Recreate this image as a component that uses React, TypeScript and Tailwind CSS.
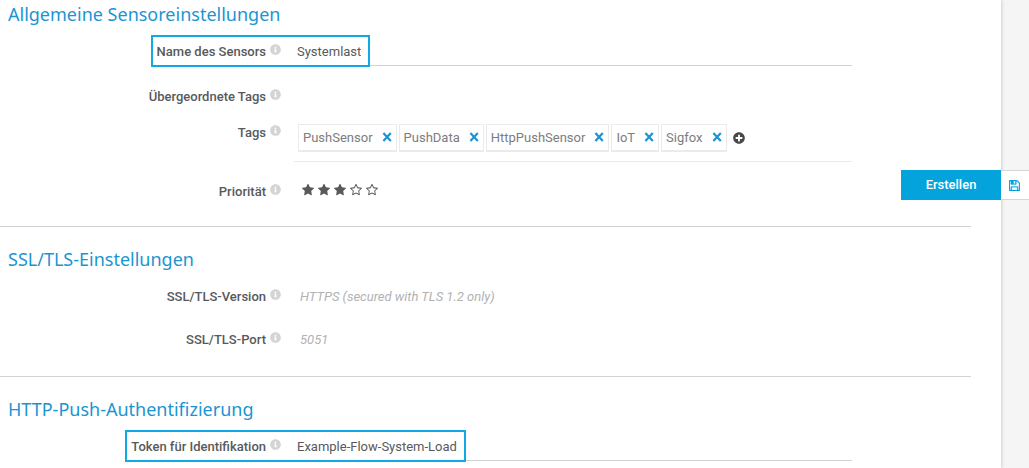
import { useState } from 'react';
import type { ReactNode } from 'react';
import { FaInfoCircle, FaPlusCircle } from 'react-icons/fa';

const STAR =
  'M1728 647q0 22-26 48l-363 354 86 500q1 7 1 20 0 21-10.5 35.5t-30.5 14.5q-19 0-40-12l-449-236-449 236q-22 12-40 12-21 0-31.5-14.5t-10.5-35.5q0-6 2-20l86-500-364-354q-25-27-25-48 0-37 56-46l502-73 225-455q19-41 49-41t49 41l225 455 502 73q56 9 56 46z';
const STAR_OUTLINE = 'M1201 1004l306-297-422-62-189-382-189 382-422 62 306 297-73 421 378-199 377 199z' + STAR.replace('M1728 647', 'm527-357');

function SaveIcon() {
  return (
    <svg viewBox="0 128 1536 1536" fill="currentColor" stroke="currentColor" strokeWidth="40" className="size-[11px]" aria-hidden="true">
      <path d="M384 1536h768v-384h-768v384zm896 0h128v-896q0-14-10-38.5t-20-34.5l-281-281q-10-10-34-20t-39-10v416q0 40-28 68t-68 28h-576q-40 0-68-28t-28-68v-416h-128v1280h128v-416q0-40 28-68t68-28h832q40 0 68 28t28 68v416zm-384-928v-320q0-13-9.5-22.5t-22.5-9.5h-192q-13 0-22.5 9.5t-9.5 22.5v320q0 13 9.5 22.5t22.5 9.5h192q13 0 22.5-9.5t9.5-22.5zm640 32v928q0 40-28 68t-68 28h-1344q-40 0-68-28t-28-68v-1344q0-40 28-68t68-28h928q40 0 88 20t76 48l280 280q28 28 48 76t20 88z" />
    </svg>
  );
}

function LabelContent({ children }: { children: ReactNode }) {
  return (
    <>
      {children}
      <FaInfoCircle className="mb-1.5 ml-1 size-[11px] text-[#d3d4d5]" aria-hidden="true" />
    </>
  );
}

function Section({ title, children }: { title: string; children: ReactNode }) {
  return (
    <section>
      <h2 className="pl-2 font-['Noto_Sans',sans-serif] text-lg leading-[26px] text-[#1b95d1]">{title}</h2>
      {children}
    </section>
  );
}

function Row({ label, className, children }: { label: string; className: string; children?: ReactNode }) {
  return (
    <div role="group" aria-label={label} className={`flex items-start ${className}`}>
      <span className="flex h-6 w-[294px] shrink-0 items-center justify-end pr-[13px] font-medium">
        <LabelContent>{label}</LabelContent>
      </span>
      {children}
    </div>
  );
}

// label and input share one outline, the underline runs on behind it
function HighlightedRow({ id, label, defaultValue }: { id: string; label: string; defaultValue: string }) {
  return (
    <div className="mt-2 flex items-start">
      <div className="flex w-[294px] shrink-0 justify-end">
        <label htmlFor={id} className="flex h-8 items-center border-y-2 border-l-2 border-[#0fa9e4] pt-0.5 pr-[13px] pl-1 font-medium">
          <LabelContent>{label}</LabelContent>
        </label>
      </div>
      <div className="mr-[149px] flex-1 border-b border-[#d2d3d4]">
        <input
          id={id}
          defaultValue={defaultValue}
          className="-mb-0.5 block h-8 field-sizing-content border-y-2 border-r-2 border-[#0fa9e4] bg-white pr-[7px] pl-[3px] outline-none"
        />
      </div>
    </div>
  );
}

function Rating() {
  const [value, setValue] = useState(3);
  return (
    <div className="flex h-5 items-center pl-[6px]">
      {[1, 2, 3, 4, 5].map((n) => (
        <button key={n} type="button" aria-label={`${n}`} onClick={() => setValue(n)} className="flex w-4 justify-center">
          <svg viewBox="64 128 1664 1536" fill="currentColor" className="size-3">
            <path d={n <= value ? STAR : STAR_OUTLINE} />
          </svg>
        </button>
      ))}
    </div>
  );
}

function Tags() {
  const [tags, setTags] = useState(['PushSensor', 'PushData', 'HttpPushSensor', 'IoT', 'Sigfox']);
  return (
    <div className="mr-[149px] flex flex-1 items-center gap-0.5 border-b border-[#ebebeb] pb-[9px] pl-1">
      {tags.map((tag) => (
        <span key={tag} className="flex h-7 items-center gap-[9px] border border-b-2 border-[#ebebeb] px-1 text-[#7c7d7e]">
          {tag}
          <button type="button" aria-label={`${tag} ×`} onClick={() => setTags(tags.filter((x) => x !== tag))} className="mb-0.5 text-[#1b95d1]">
            <svg viewBox="0 0 10 10" className="size-[10px]" fill="none" stroke="currentColor" strokeWidth="2.2">
              <path d="M1.4 1l7.4 8M8.8 1L1.4 9" />
            </svg>
          </button>
        </span>
      ))}
      <button type="button" aria-label="+" className="ml-1">
        <FaPlusCircle className="size-3 text-[#464849]" />
      </button>
    </div>
  );
}

export default function App() {
  return (
    <div className="relative flex min-h-screen bg-[#f5f5f5] font-[Roboto,sans-serif] text-[13px] leading-4 text-[#58595b]">
      <main className="min-w-0 flex-1 bg-white pt-px shadow-[1px_0_3px_rgba(0,0,0,0.15)]">
        <Section title="Allgemeine Sensoreinstellungen">
          <HighlightedRow id="name" label="Name des Sensors" defaultValue="Systemlast" />
          <Row label="Übergeordnete Tags" className="mt-[18px]" />
          <Row label="Tags" className="mt-3">
            <div className="flex flex-1 pt-[3px]">
              <Tags />
            </div>
          </Row>
          <Row label="Priorität" className="mt-[18px]">
            <Rating />
          </Row>
        </Section>
        <hr className="mt-[22px] mr-[30px] mb-[19px] border-[#d2d3d4]" />
        <Section title="SSL/TLS-Einstellungen">
          <Row label="SSL/TLS-Version" className="mt-[13px]">
            <span className="pl-[6px] leading-6 text-[#b1b2b3] italic">HTTPS (secured with TLS 1.2 only)</span>
          </Row>
          <Row label="SSL/TLS-Port" className="mt-[19px]">
            <span className="pl-[6px] leading-6 text-[#b1b2b3] italic">5051</span>
          </Row>
        </Section>
        <hr className="mt-6 mr-[30px] mb-[19px] border-[#d2d3d4]" />
        <Section title="HTTP-Push-Authentifizierung">
          <HighlightedRow id="token" label="Token für Identifikation" defaultValue="Example-Flow-System-Load" />
        </Section>
      </main>
      <aside className="w-7 shrink-0" />
      <div className="absolute top-[170px] right-0 flex">
        <button type="button" className="h-[30px] w-[100px] bg-[#04a3dc] font-medium text-white">
          Erstellen
        </button>
        <button type="button" aria-label="Speichern" className="flex h-[30px] w-7 items-center border-y border-[#d6d6d6] bg-white pl-2 text-[#04a3dc]">
          <SaveIcon />
        </button>
      </div>
    </div>
  );
}
